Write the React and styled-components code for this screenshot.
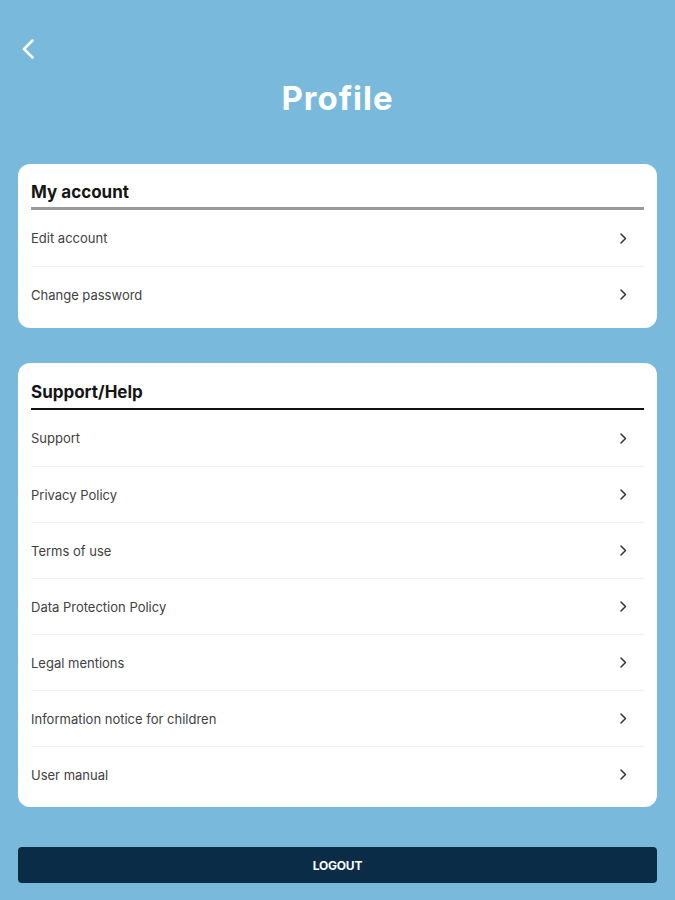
import React from "react";
import styled, { createGlobalStyle } from "styled-components";

const GlobalStyle = createGlobalStyle`
  html, body {
    margin: 0;
    padding: 0;
    background: #79b9db;
  }
  body {
    font-family: Inter, "Noto Sans", Roboto, sans-serif;
  }
`;

const Page = styled.div`
  min-height: 900px;
  padding: 0 18px 17px;
  box-sizing: border-box;
  display: flex;
  flex-direction: column;
`;

const BackButton = styled.button`
  align-self: flex-start;
  margin: 39px 0 0 4px;
  padding: 0;
  border: none;
  background: none;
  width: 12px;
  height: 20px;
  display: flex;
  cursor: pointer;
`;

const Title = styled.h1`
  margin: 19px 0 0;
  text-align: center;
  color: #fff;
  font-size: 33px;
  line-height: 40px;
  font-weight: 700;
  letter-spacing: 1px;
`;

const Card = styled.section`
  background: #fff;
  border-radius: 12px;
  padding: 0 13px ${(p) => p.$bottom}px;
  margin-top: ${(p) => p.$top}px;
`;

const CardTitle = styled.h2`
  margin: 0;
  padding: ${(p) => p.$padTop}px 0 ${(p) => p.$padBottom}px;
  font-size: 17px;
  line-height: 20px;
  font-weight: 700;
  color: #151515;
  border-bottom: ${(p) => p.$line};
`;

const Row = styled.div`
  height: 56px;
  box-sizing: border-box;
  display: flex;
  align-items: center;
  justify-content: space-between;
  padding-right: 17px;
  font-size: 13px;
  color: #414141;
  cursor: pointer;

  & + & {
    border-top: 1px solid #f1f1f1;
  }
`;

const LogoutButton = styled.button`
  margin-top: 40px;
  height: 36px;
  border: none;
  border-radius: 4px;
  background: #0b2c47;
  color: #fff;
  font-family: Inter, "Noto Sans", sans-serif;
  font-size: 12px;
  font-weight: 700;
  letter-spacing: -0.2px;
  cursor: pointer;
`;

const Chevron = () => (
  <svg width="7" height="11" viewBox="0 0 7 11">
    <polyline
      points="1,1 5.5,5.5 1,10"
      fill="none"
      stroke="#333"
      strokeWidth="1.5"
      strokeLinecap="round"
      strokeLinejoin="round"
    />
  </svg>
);

const ListRow = ({ label }) => (
  <Row>
    <span>{label}</span>
    <Chevron />
  </Row>
);

const support = [
  "Support",
  "Privacy Policy",
  "Terms of use",
  "Data Protection Policy",
  "Legal mentions",
  "Information notice for children",
  "User manual",
];

export default function App() {
  return (
    <>
      <GlobalStyle />
      <Page>
        <BackButton aria-label="Back">
          <svg width="12" height="20" viewBox="0 0 12 20">
            <polyline
              points="10.5,1.5 2,10 10.5,18.5"
              fill="none"
              stroke="#fff"
              strokeWidth="2.5"
              strokeLinecap="round"
              strokeLinejoin="round"
            />
          </svg>
        </BackButton>
        <Title>Profile</Title>

        <Card $top={46} $bottom={6}>
          <CardTitle $padTop={18} $padBottom={5} $line="3px solid #9a9a9a">
            My account
          </CardTitle>
          <ListRow label="Edit account" />
          <ListRow label="Change password" />
        </Card>

        <Card $top={35} $bottom={5}>
          <CardTitle $padTop={19} $padBottom={6} $line="2px solid #111">
            Support/Help
          </CardTitle>
          {support.map((s) => (
            <ListRow key={s} label={s} />
          ))}
        </Card>

        <LogoutButton>LOGOUT</LogoutButton>
      </Page>
    </>
  );
}
